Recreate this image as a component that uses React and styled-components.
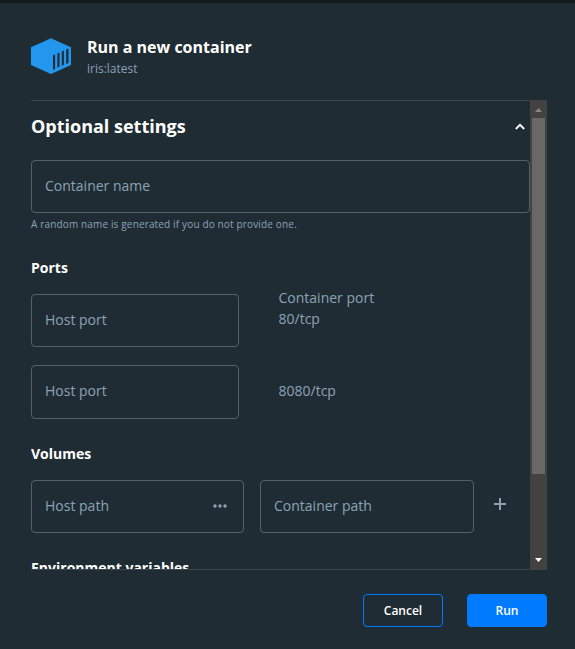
import React from "react";
import styled, { createGlobalStyle } from "styled-components";

const GlobalStyle = createGlobalStyle`
  *, *::before, *::after { box-sizing: border-box; }
  body { margin: 0; background: #202c33; font-family: "Open Sans", "Noto Sans", sans-serif; }
`;

const Dialog = styled.main`
  display: flex;
  flex-direction: column;
  width: 575px;
  height: 649px;
  padding: 0 28px 0 31px;
  overflow: hidden;
  background: #202c33;
  border-top: 3px solid #12191d;
  color: #8ba3b7;
  font-size: 14px;
`;

const Header = styled.header`
  display: flex;
  gap: 16px;
  height: 97px;
  flex: none;
  padding-top: 34px;
`;

const Logo = styled.svg`
  display: block;
  width: 40px;
  height: 37px;
  margin-top: 1px;
`;

const Title = styled.h1`
  margin: 0;
  color: #fff;
  font-size: 16px;
  line-height: 20px;
  font-weight: 700;
`;

const Subtitle = styled.p`
  margin: 4px 0 0;
  font-size: 12px;
  line-height: 16px;
`;

const Body = styled.div`
  display: flex;
  height: 470px;
  flex: none;
`;

const Content = styled.section`
  width: 499px;
  overflow: hidden;
  border-top: 1px solid #3a474e;
  border-bottom: 1px solid #3a474e;
`;

const SectionHeader = styled.div`
  display: flex;
  justify-content: space-between;
  align-items: center;
  height: 50px;
  padding: 0 5px 0 0;
`;

const SectionTitle = styled.h2`
  margin: 0;
  color: #fff;
  font-size: 18px;
  line-height: 24px;
  font-weight: 700;
`;

const Field = styled.div`
  display: flex;
  align-items: center;
  justify-content: space-between;
  width: ${(p) => p.$width}px;
  height: ${(p) => p.$height || 53}px;
  margin-top: ${(p) => p.$top || 0}px;
  padding: 0 16px ${(p) => (p.$height ? 4 : 2)}px 13px;
  border: 1px solid #566167;
  border-radius: 4px;
`;

const Helper = styled.p`
  margin: 4px 0 0;
  font-size: 10px;
  line-height: 14px;
  letter-spacing: 0.15px;
`;

const GroupTitle = styled.h3`
  margin: ${(p) => p.$top}px 0 0;
  color: #fff;
  font-size: 14px;
  line-height: 20px;
  font-weight: 700;
`;

const PortRow = styled.div`
  display: flex;
  gap: 39.5px;
  margin-top: ${(p) => p.$top}px;
`;

const PortInfo = styled.div`
  margin-top: ${(p) => p.$top}px;
  line-height: 21px;
`;

const VolumeRow = styled.div`
  display: flex;
  gap: 16px;
  margin-top: 16px;
`;

const Icon = styled.svg`
  display: block;
  flex: none;
`;

const AddIcon = styled(Icon)`
  margin: 18px 0 0 4px;
`;

const Scrollbar = styled.div`
  display: flex;
  flex-direction: column;
  align-items: center;
  width: 17px;
  background: #424242;
`;

const Arrow = styled.svg`
  display: block;
  width: 17px;
  height: 17px;
  flex: none;
`;

const Track = styled.div`
  flex: 1;
  padding-top: 1px;
`;

const Thumb = styled.div`
  width: 13px;
  height: 356px;
  background: #686868;
`;

const Footer = styled.footer`
  display: flex;
  justify-content: flex-end;
  gap: 24px;
  padding-top: 24px;
`;

const Button = styled.button`
  width: 80px;
  height: 33px;
  padding: 0;
  border: 1px solid #007bff;
  border-radius: 4px;
  background: ${(p) => (p.$primary ? "#007bff" : "transparent")};
  color: #fff;
  font: 600 12px/16px "Open Sans", "Noto Sans", sans-serif;
`;

export default function App() {
  return (
    <>
      <GlobalStyle />
      <Dialog>
        <Header>
          <Logo viewBox="0 0 40 37">
            <path d="M20 0.2 40 9.2V27L20 36 0 27V9.2Z" fill="#2396ed" />
            <path
              d="M22 17.3 24.1 16.5V30.9L22 31.7ZM26.4 15.4 28.5 14.5V28.8L26.4 29.6ZM30.8 13.4 32.9 12.5V26.8L30.8 27.7ZM35.2 11.5 37.5 10.6V25L35.2 25.9Z"
              fill="#202c33"
            />
          </Logo>
          <div>
            <Title>Run a new container</Title>
            <Subtitle>iris:latest</Subtitle>
          </div>
        </Header>

        <Body>
          <Content>
            <SectionHeader>
              <SectionTitle>Optional settings</SectionTitle>
              <Icon width="10" height="7" viewBox="0 0 10 7">
                <path d="M0.8 6 5 1.8 9.2 6" fill="none" stroke="#fff" strokeWidth="1.8" />
              </Icon>
            </SectionHeader>
            <Field $width={499} $top={9}>Container name</Field>
            <Helper>A random name is generated if you do not provide one.</Helper>

            <GroupTitle $top={27}>Ports</GroupTitle>
            <PortRow $top={16}>
              <Field $width={208}>Host port</Field>
              <PortInfo $top={-7}>
                Container port
                <br />
                80/tcp
              </PortInfo>
            </PortRow>
            <PortRow $top={18}>
              <Field $width={208} $height={54}>Host port</Field>
              <PortInfo $top={15}>8080/tcp</PortInfo>
            </PortRow>

            <GroupTitle $top={25}>Volumes</GroupTitle>
            <VolumeRow>
              <Field $width={213}>
                Host path
                <Icon width="14" height="4" viewBox="0 0 14 4" fill="#8ba3b7">
                  <circle cx="2" cy="2" r="1.7" />
                  <circle cx="7" cy="2" r="1.7" />
                  <circle cx="12" cy="2" r="1.7" />
                </Icon>
              </Field>
              <Field $width={214}>Container path</Field>
              <AddIcon width="12" height="12" viewBox="0 0 12 12" fill="#8ba3b7">
                <path d="M5 0H7V5H12V7H7V12H5V7H0V5H5Z" />
              </AddIcon>
            </VolumeRow>

            <GroupTitle $top={25}>Environment variables</GroupTitle>
          </Content>
          <Scrollbar>
            <Arrow viewBox="0 0 17 17">
              <path d="M8.5 8 12 12H5Z" fill="#868686" />
            </Arrow>
            <Track>
              <Thumb />
            </Track>
            <Arrow viewBox="0 0 17 17">
              <path d="M5 5H12L8.5 9Z" fill="#fff" />
            </Arrow>
          </Scrollbar>
        </Body>

        <Footer>
          <Button type="button">Cancel</Button>
          <Button type="button" $primary>Run</Button>
        </Footer>
      </Dialog>
    </>
  );
}
